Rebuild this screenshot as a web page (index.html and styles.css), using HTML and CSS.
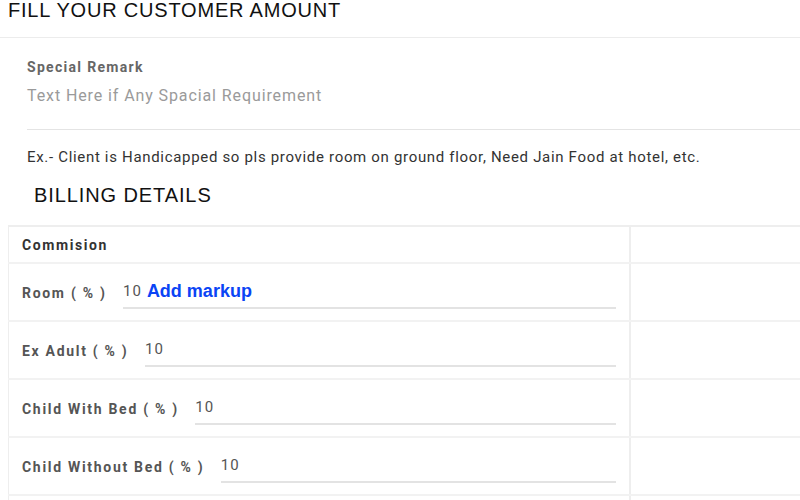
FILE: index.html
```html
<!DOCTYPE html>
<html>
<head>
<meta charset="utf-8">
<link rel="stylesheet" href="styles.css">
</head>
<body>
<h2 class="page-title">FILL YOUR CUSTOMER AMOUNT</h2>
<div class="remark">
  <div class="remark-label">Special Remark</div>
  <div class="remark-input">Text Here if Any Spacial Requirement</div>
  <p class="remark-example">Ex.- Client is Handicapped so pls provide room on ground floor, Need Jain Food at hotel, etc.</p>
</div>
<h3 class="section-title">BILLING DETAILS</h3>
<div class="table-wrap">
<table class="billing">
  <tr class="head-row"><th>Commision</th><th></th></tr>
  <tr><td><div class="field"><span class="field-label">Room ( % )</span><div class="field-input"><span class="val">10</span> <span class="markup">Add markup</span></div></div></td><td></td></tr>
  <tr><td><div class="field"><span class="field-label">Ex Adult ( % )</span><div class="field-input"><span class="val">10</span></div></div></td><td></td></tr>
  <tr><td><div class="field"><span class="field-label">Child With Bed ( % )</span><div class="field-input"><span class="val">10</span></div></div></td><td></td></tr>
  <tr><td><div class="field"><span class="field-label">Child Without Bed ( % )</span><div class="field-input"><span class="val">10</span></div></div></td><td></td></tr>
  <tr><td></td><td></td></tr>
</table>
</div>
</body>
</html>
```
FILE: styles.css
```css
html, body {
  margin: 0;
  padding: 0;
  overflow: hidden;
  background: #fff;
  font-family: Roboto, "Liberation Sans", sans-serif;
}
.page-title {
  margin: 0;
  padding: 0 0 0 8px;
  height: 38px;
  line-height: 20px;
  font-family: "Liberation Sans", Arial, sans-serif;
  font-weight: normal;
  font-size: 20px;
  letter-spacing: 0.8px;
  color: #111;
  border-bottom: 1px solid #ececec;
  box-sizing: border-box;
}
.remark {
  padding-left: 27px;
}
.remark-label {
  margin-top: 20px;
  font-size: 14px;
  font-weight: bold;
  letter-spacing: 1.3px;
  color: #666;
  line-height: 18px;
}
.remark-input {
  margin-top: 10px;
  font-size: 16px;
  letter-spacing: 0.9px;
  color: #9a9a9a;
  line-height: 20px;
  padding-bottom: 23px;
  border-bottom: 1px solid #e4e4e4;
}
.remark-example {
  margin: 18px 0 0;
  font-size: 15px;
  letter-spacing: 0.68px;
  color: #333;
  line-height: 18px;
}
.section-title {
  margin: 18px 0 0 34px;
  font-family: "Liberation Sans", Arial, sans-serif;
  font-weight: normal;
  font-size: 20px;
  letter-spacing: 0.9px;
  color: #111;
  line-height: 22px;
}
.table-wrap {
  padding: 19px 0 0 8px;
}
.billing {
  width: 820px;
  border-collapse: collapse;
  border-top: 2px solid #eeeeee;
  border-left: 1px solid #eeeeee;
}
.billing th, .billing td {
  padding: 0 13px;
  border-bottom: 2px solid #f2f2f2;
  text-align: left;
}
.billing th:first-child, .billing td:first-child {
  width: 594px;
  border-right: 2px solid #eeeeee;
}
.head-row th {
  height: 35px;
  font-size: 14px;
  font-weight: bold;
  letter-spacing: 1.6px;
  color: #333;
}
.billing td {
  height: 56px;
}
.field {
  display: flex;
  align-items: center;
}
.field-label {
  font-size: 14px;
  font-weight: bold;
  letter-spacing: 1.7px;
  color: #555;
  margin-right: 16.5px;
  padding-top: 2px;
}
.field-input {
  flex: 1;
  height: 34px;
  border-bottom: 2px solid #e3e3e3;
  display: flex;
  align-items: center;
  box-sizing: border-box;
}
.val {
  font-size: 15px;
  letter-spacing: 1px;
  color: #555;
}
.markup {
  margin-left: 5px;
  font-family: "Liberation Sans", Arial, sans-serif;
  font-weight: bold;
  font-size: 18px;
  letter-spacing: 0;
  color: #0a44f5;
}
```
